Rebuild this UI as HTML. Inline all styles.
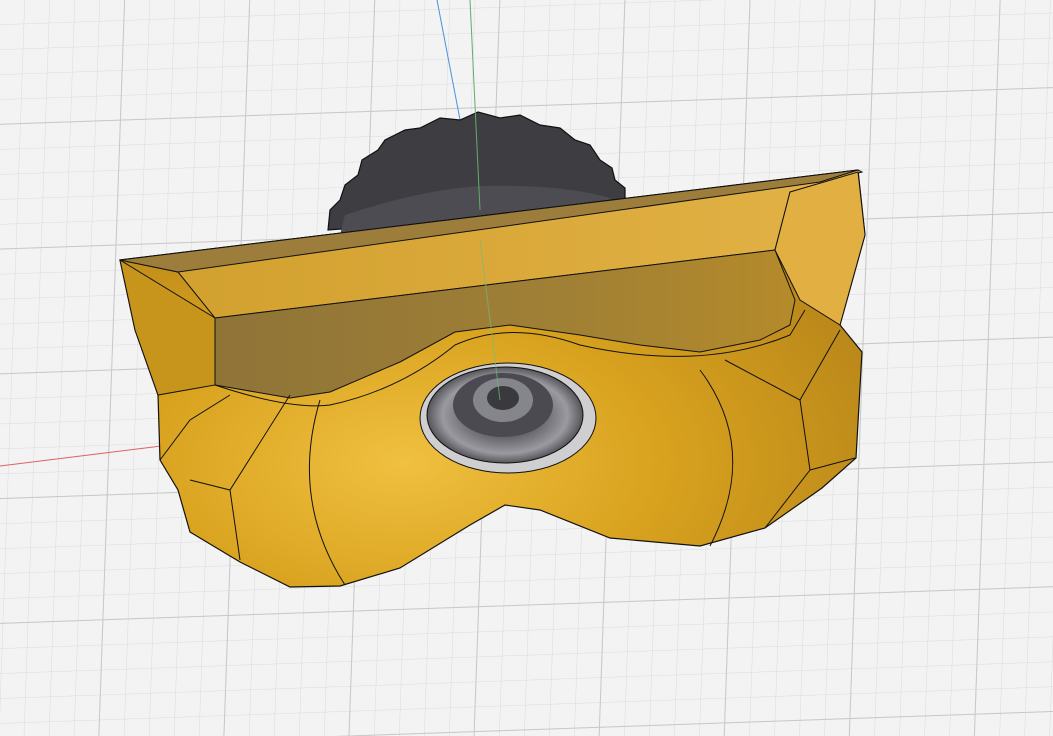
<!DOCTYPE html>
<html><head><meta charset="utf-8"><style>html,body{margin:0;padding:0;background:#f3f3f3;overflow:hidden}svg{display:block}</style></head>
<body>
<svg width="1053" height="736" viewBox="0 0 1053 736" xmlns="http://www.w3.org/2000/svg">
<defs>
<linearGradient id="band" x1="0" y1="0" x2="1" y2="0"><stop offset="0" stop-color="#d09f2c"/><stop offset="1" stop-color="#e3b247"/></linearGradient>
<linearGradient id="wall" x1="0" y1="0" x2="1" y2="0"><stop offset="0" stop-color="#8f7438"/><stop offset=".6" stop-color="#a08035"/><stop offset="1" stop-color="#b58a2a"/></linearGradient>
<radialGradient id="body" cx="0.38" cy="0.7" r="0.7"><stop offset="0" stop-color="#f0c040"/><stop offset=".5" stop-color="#d8a21e"/><stop offset="1" stop-color="#b8861a"/></radialGradient>
<radialGradient id="hole" cx="0.5" cy="0.5" r="0.5"><stop offset="0" stop-color="#303034"/><stop offset=".5" stop-color="#6a6a70"/><stop offset=".8" stop-color="#9a9aa0"/><stop offset="1" stop-color="#55555a"/></radialGradient>
<pattern id="g" width="25" height="25" patternUnits="userSpaceOnUse" patternTransform="skewX(-4) rotate(-2)"><path d="M25 0V25M0 25H25" stroke="#dadada" stroke-width="1" fill="none"/></pattern>
<pattern id="G" width="125" height="125" patternUnits="userSpaceOnUse" patternTransform="skewX(-4) rotate(-2)"><path d="M125 0V125M0 125H125" stroke="#c8c8c8" stroke-width="2" fill="none"/></pattern>
</defs>
<rect width="1053" height="736" fill="#f3f3f3"/>
<rect width="1053" height="736" fill="url(#g)"/>
<rect width="1053" height="736" fill="url(#G)"/>
<line x1="0" y1="466" x2="500" y2="404" stroke="#e06060" stroke-width="1"/>
<line x1="437" y1="0" x2="462" y2="130" stroke="#4a90e0" stroke-width="1"/>
<path d="M328 230 L330 210 L340 200 L345 185 L358 175 L362 160 L378 150 L385 140 L405 130 L420 128 L440 118 L460 120 L478 112 L500 118 L520 115 L540 125 L560 128 L575 140 L590 145 L600 160 L612 168 L615 180 L625 188 L625 200 L600 210 Z" fill="#3e3e42" stroke="#111" stroke-width="1.2"/>
<path d="M345 215 Q420 190 480 186 Q560 184 610 198 L615 210 L340 235 Z" fill="#4c4c52"/>
<line x1="470" y1="0" x2="480" y2="210" stroke="#5fae6a" stroke-width="1"/>
<path d="M120 260 L858 170 L865 235 L840 325 L862 352 L856 458 L822 488 L765 528 L700 546 L610 538 L540 510 L505 505 L470 525 L400 568 L340 586 L290 587 L240 562 L190 532 L178 490 L160 460 L158 395 L135 330 Z" fill="url(#body)" stroke="#111" stroke-width="1.2"/>
<path d="M120 260 L858 170 L862 172 L790 192 L775 250 L215 318 L178 272 Z" fill="url(#band)" stroke="#111" stroke-width="1"/>
<path d="M120 260 L858 170 L820 182 L178 272 Z" fill="#9c7d3c" stroke="#111" stroke-width="1"/>
<path d="M215 318 L775 250 L795 300 L790 325 L760 340 L700 352 L640 345 L580 335 L510 325 L455 332 L400 362 L330 392 L290 398 L215 385 Z" fill="url(#wall)" stroke="#111" stroke-width="1"/>
<path d="M790 192 L858 172 L865 235 L840 325 L800 300 L775 250 Z" fill="#e2b042" stroke="#111" stroke-width="1"/>
<path d="M120 260 L215 318 L215 385 L158 395 L135 330 Z" fill="#c8951c" stroke="#111" stroke-width="1"/>
<path d="M215 385 Q290 410 330 405 Q400 390 455 345 Q510 320 580 345 Q700 372 790 335 L805 310" fill="none" stroke="#111" stroke-width="1"/>
<path d="M160 460 L190 420 L230 395 M190 480 L230 490 L290 395 M230 490 L240 560 M320 400 Q290 500 345 585 M700 370 Q760 450 710 546 M725 360 L800 400 L810 470 L765 528 M810 470 L855 458 M800 400 L840 330" fill="none" stroke="#111" stroke-width="1"/>
<ellipse cx="508" cy="418" rx="88" ry="55" fill="#cfcfd2" stroke="#111" stroke-width="1"/>
<ellipse cx="505" cy="415" rx="78" ry="48" fill="url(#hole)" stroke="#111" stroke-width="1"/>
<ellipse cx="503" cy="405" rx="50" ry="32" fill="#4a4a50"/>
<ellipse cx="503" cy="400" rx="30" ry="22" fill="#85858c"/>
<ellipse cx="503" cy="398" rx="16" ry="12" fill="#3a3a3e"/>
<line x1="480" y1="240" x2="500" y2="400" stroke="#6fbe7a" stroke-width="1" opacity=".7"/>
</svg>
</body></html>
